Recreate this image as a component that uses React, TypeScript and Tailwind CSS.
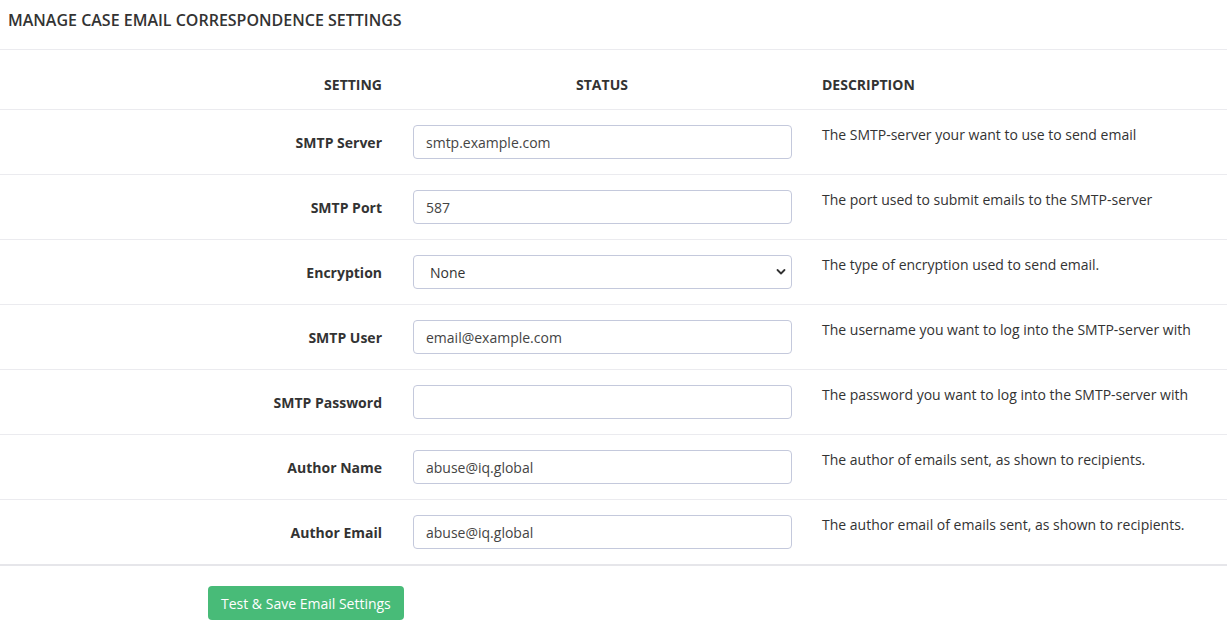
import React from "react";

const rows: { label: string; value: string; desc: string; select?: boolean }[] = [
  { label: "SMTP Server", value: "smtp.example.com", desc: "The SMTP-server your want to use to send email" },
  { label: "SMTP Port", value: "587", desc: "The port used to submit emails to the SMTP-server" },
  { label: "Encryption", value: "None", desc: "The type of encryption used to send email.", select: true },
  { label: "SMTP User", value: "email@example.com", desc: "The username you want to log into the SMTP-server with" },
  { label: "SMTP Password", value: "", desc: "The password you want to log into the SMTP-server with" },
  { label: "Author Name", value: "abuse@iq.global", desc: "The author of emails sent, as shown to recipients." },
  { label: "Author Email", value: "abuse@iq.global", desc: "The author email of emails sent, as shown to recipients." },
];

export default function App() {
  return (
    <div className="w-[1227px] h-[630px] bg-white text-[#333] text-[14px] overflow-hidden" style={{ fontFamily: '"Open Sans", "Liberation Sans", sans-serif' }}>
      <div className="h-[50px] border-b border-[#ebebef] pl-2 pt-[8px] text-[16px] font-semibold leading-[24px] text-[#333]">
        MANAGE CASE EMAIL CORRESPONDENCE SETTINGS
      </div>
      <div className="grid grid-cols-[397px_410px_1fr] h-[59px] pt-[10px] items-center font-bold text-[14px]">
        <div className="text-right pr-[15px]">SETTING</div>
        <div className="text-center">STATUS</div>
        <div className="pl-[15px]">DESCRIPTION</div>
      </div>
      {rows.map((r) => (
        <div key={r.label} className="grid grid-cols-[397px_410px_1fr] h-[65px] border-t border-[#ebebef]">
          <div className="flex items-center justify-end pr-[15px] font-bold">{r.label}</div>
          <div className="flex items-center pl-[16px] pr-[15px]">
            {r.select ? (
              <div className="relative w-full">
                <select
                  defaultValue="None"
                  className="w-full h-[34px] appearance-none rounded-[4px] border border-[#c4c9dc] bg-white pl-[16px] text-[14px] text-[#333] outline-none"
                  style={{ fontFamily: '"Open Sans", "Liberation Sans", sans-serif' }}
                >
                  <option>None</option>
                </select>
                <svg className="absolute right-[6px] top-[12px] pointer-events-none" width="10" height="10" viewBox="0 0 10 10">
                  <path d="M1.5 3 L5 6.5 L8.5 3" fill="none" stroke="#333" strokeWidth="1.8" strokeLinecap="round" strokeLinejoin="round" />
                </svg>
              </div>
            ) : (
              <input
                readOnly
                defaultValue={r.value}
                type="text"
                className="w-full h-[34px] rounded-[4px] border border-[#c4c9dc] bg-white px-[12px] text-[14px] text-[#444] outline-none"
                style={{ fontFamily: '"Open Sans", "Liberation Sans", sans-serif' }}
              />
            )}
          </div>
          <div className="pl-[15px] pt-[14px] leading-[22px]">{r.desc}</div>
        </div>
      ))}
      <div className="border-t-2 border-[#e6e6ea]" />
      <div className="pt-[20px] pl-[208px]">
        <button className="h-[34px] px-[13px] rounded-[4px] bg-[#48bb78] text-white text-[14px]" style={{ fontFamily: '"Open Sans", "Liberation Sans", sans-serif' }}>
          Test &amp; Save Email Settings
        </button>
      </div>
    </div>
  );
}
